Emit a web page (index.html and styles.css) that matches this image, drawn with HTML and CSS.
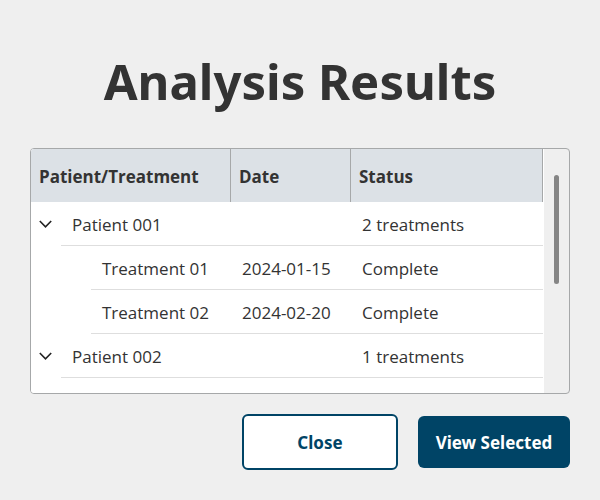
FILE: index.html
```html
<!DOCTYPE html>
<html lang="en">
<head>
<meta charset="utf-8">
<title>Analysis Results</title>
<link rel="stylesheet" href="styles.css">
</head>
<body>
<main class="dialog">
  <h1 class="title">Analysis Results</h1>
  <div class="panel">
    <div class="content">
      <table class="tree">
        <colgroup><col class="col-name"><col class="col-date"><col></colgroup>
        <thead>
          <tr><th scope="col">Patient/Treatment</th><th scope="col">Date</th><th scope="col">Status</th></tr>
        </thead>
        <tbody>
          <tr>
            <td><div class="name"><button class="toggle" type="button" aria-label="Collapse Patient 001"><svg class="chevron" viewBox="0 0 14 8"><path d="M.8 1 6.5 6.8 12.2 1"/></svg></button><span class="cell">Patient 001</span></div></td>
            <td><span class="cell"></span></td>
            <td><span class="cell">2 treatments</span></td>
          </tr>
          <tr>
            <td><div class="name child"><span class="cell">Treatment 01</span></div></td>
            <td><span class="cell">2024-01-15</span></td>
            <td><span class="cell">Complete</span></td>
          </tr>
          <tr>
            <td><div class="name child"><span class="cell">Treatment 02</span></div></td>
            <td><span class="cell">2024-02-20</span></td>
            <td><span class="cell">Complete</span></td>
          </tr>
          <tr>
            <td><div class="name"><button class="toggle" type="button" aria-label="Collapse Patient 002"><svg class="chevron" viewBox="0 0 14 8"><path d="M.8 1 6.5 6.8 12.2 1"/></svg></button><span class="cell">Patient 002</span></div></td>
            <td><span class="cell"></span></td>
            <td><span class="cell">1 treatments</span></td>
          </tr>
        </tbody>
      </table>
    </div>
    <div class="rail"><div class="thumb"></div></div>
  </div>
  <div class="actions">
    <button class="button secondary" type="button">Close</button>
    <button class="button primary" type="button">View Selected</button>
  </div>
</main>
</body>
</html>
```
FILE: styles.css
```css
* {
  box-sizing: border-box;
}

body {
  margin: 0;
  background: #efefef;
  color: #333;
  font-family: "Open Sans", "Noto Sans", sans-serif;
  font-size: 17px;
}

.dialog {
  padding: 48px 30px 30px;
}

.title {
  margin: 0 0 34px;
  font-family: "Noto Sans", sans-serif;
  font-size: 49px;
  line-height: 66px;
  font-weight: 700;
  text-align: center;
}

.panel {
  display: flex;
  border: 1px solid #a6a8a9;
  border-radius: 4px;
  overflow: hidden;
}

.content {
  flex: 1;
  padding: 0 1px 15px 0;
  background: #fff;
}

.tree {
  width: 100%;
  border-collapse: separate;
  border-spacing: 0;
  table-layout: fixed;
}

.col-name {
  width: 200px;
}

.col-date {
  width: 120px;
}

th {
  height: 53px;
  padding: 2px 8px 0;
  border-right: 1px solid #a6a8a9;
  background: #dce1e6;
  text-align: left;
  font-weight: 700;
}

td {
  padding: 0;
}

.name {
  display: flex;
}

.child {
  padding-left: 60px;
}

.cell {
  display: block;
  flex: 1;
  height: 44px;
  padding: 2px 0 0 11px;
  border-bottom: 1px solid #dedede;
  line-height: 41px;
  white-space: nowrap;
}

.toggle {
  display: flex;
  align-items: center;
  justify-content: center;
  width: 30px;
  height: 44px;
  padding: 0;
  border: 0;
  background: none;
}

.chevron {
  width: 14px;
  height: 8px;
  fill: none;
  stroke: #222;
  stroke-width: 1.6;
}

.rail {
  width: 25px;
  padding: 26px 0 0 10px;
}

.thumb {
  width: 5px;
  height: 109px;
  border-radius: 3px;
  background: #858585;
}

.actions {
  display: flex;
  align-items: center;
  justify-content: flex-end;
  gap: 20px;
  margin-top: 20px;
}

.button {
  border-radius: 6px;
  font-family: "Noto Sans", sans-serif;
  font-size: 17px;
  font-weight: 700;
}

.secondary {
  width: 156px;
  height: 56px;
  border: 2px solid #004466;
  background: #fff;
  color: #004466;
}

.primary {
  width: 152px;
  height: 52px;
  padding: 0;
  border: 0;
  background: #004466;
  color: #fff;
}
```
